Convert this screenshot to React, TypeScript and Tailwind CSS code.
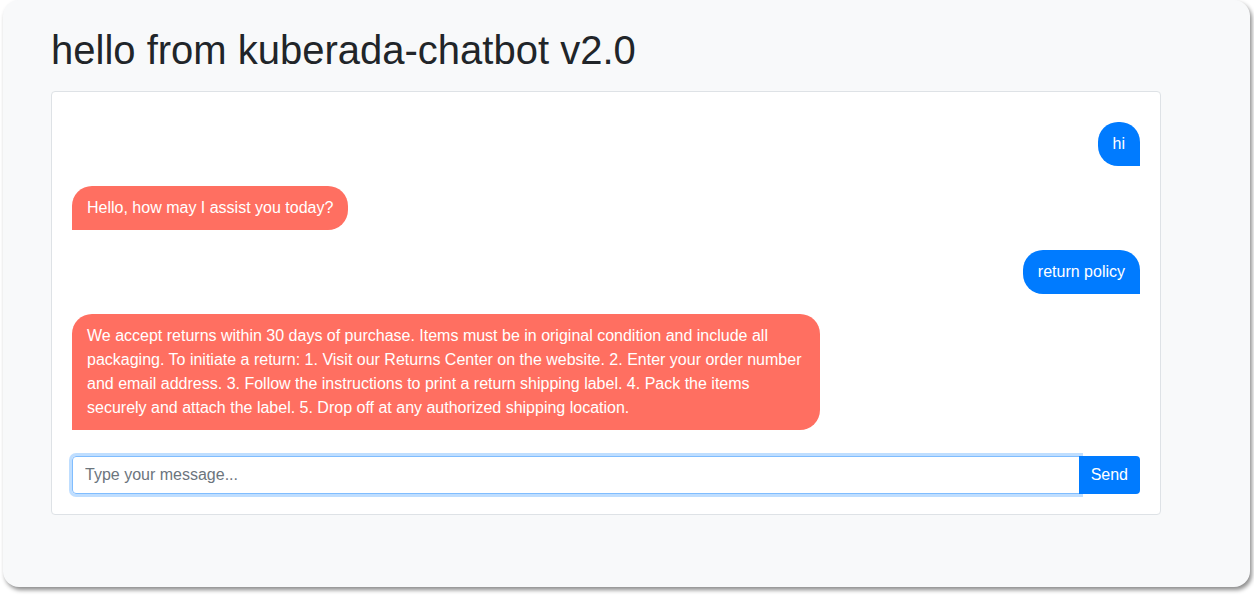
const messages = [
  { from: "user", text: "hi" },
  { from: "bot", text: "Hello, how may I assist you today?" },
  { from: "user", text: "return policy" },
  {
    from: "bot",
    text: "We accept returns within 30 days of purchase. Items must be in original condition and include all packaging. To initiate a return: 1. Visit our Returns Center on the website. 2. Enter your order number and email address. 3. Follow the instructions to print a return shipping label. 4. Pack the items securely and attach the label. 5. Drop off at any authorized shipping location.",
  },
];

export default function App() {
  return (
    <div className="w-full h-[595px] bg-white pl-[3px] pr-[4px] font-['Liberation_Sans',Arial,sans-serif]">
      <div className="h-[587px] rounded-[16px] bg-[#f8f9fa] shadow-[2px_3px_4px_rgba(0,0,0,0.45)] pl-[48px] pt-[26px]">
        <h1 className="text-[40px] leading-[48px] text-[#212529] mb-[17px]">
          hello from kuberada-chatbot v2.0
        </h1>

        {/* CHAT CARD */}
        <div className="w-[1110px] bg-white border border-[#dee2e6] rounded-[4px] p-[20px]">
          <div className="flex flex-col gap-[20px] pt-[10px]">
            {messages.map((m, i) =>
              m.from === "user" ? (
                <div key={i} className="flex justify-end">
                  <div className="bg-[#007bff] text-white text-[16px] leading-[24px] px-[15px] py-[10px] rounded-[20px] rounded-br-none">
                    {m.text}
                  </div>
                </div>
              ) : (
                <div key={i} className="flex justify-start">
                  <div className="max-w-[70%] bg-[#ff6f61] text-white text-[16px] leading-[24px] px-[15px] py-[10px] rounded-[20px] rounded-bl-none">
                    {m.text}
                  </div>
                </div>
              )
            )}
          </div>

          {/* INPUT */}
          <div className="flex mt-[26px]">
            <input
              type="text"
              placeholder="Type your message..."
              className="flex-1 h-[38px] px-[12px] text-[16px] text-[#495057] placeholder:text-[#6c757d] border border-[#80bdff] rounded-l-[4px] outline-none shadow-[0_0_0_3px_rgba(0,123,255,0.25)]"
            />
            <button className="-ml-px h-[38px] px-[12px] bg-[#007bff] text-white text-[16px] rounded-r-[4px]">
              Send
            </button>
          </div>
        </div>
      </div>
    </div>
  );
}
